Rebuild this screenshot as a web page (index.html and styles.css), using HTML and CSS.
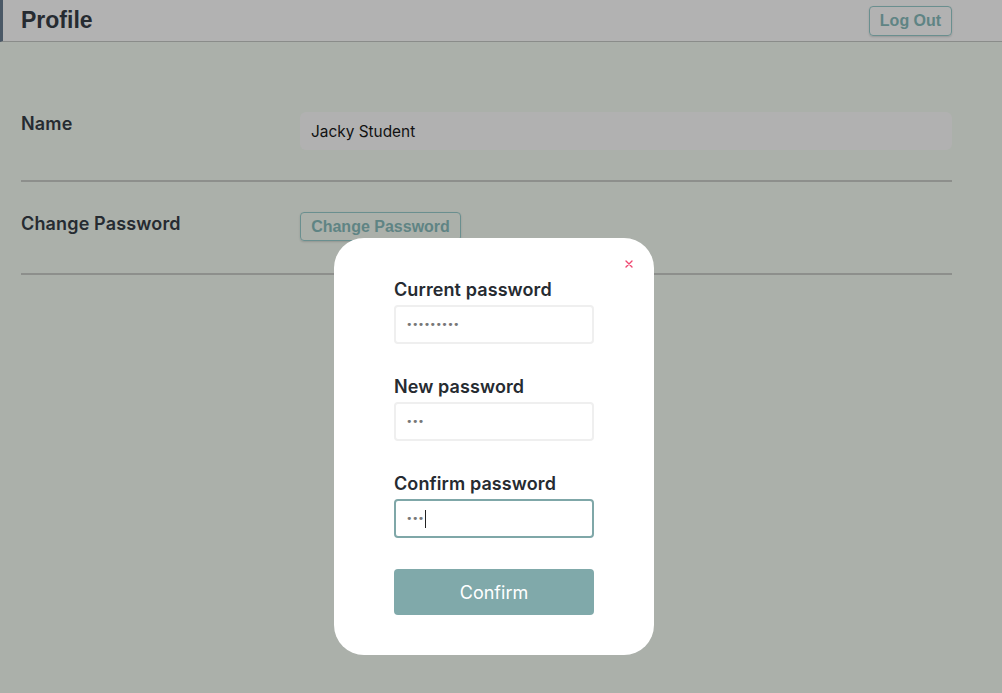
FILE: index.html
```html
<!DOCTYPE html>
<html lang="en">
<head>
<meta charset="utf-8">
<title>Profile</title>
<link rel="stylesheet" href="styles.css">
</head>
<body>
<header class="topbar">
  <h1 class="title">Profile</h1>
  <button class="btn-outline logout">Log Out</button>
</header>
<main class="content">
  <section class="row">
    <div class="row-label">Name</div>
    <div class="name-field">Jacky Student</div>
  </section>
  <section class="row">
    <div class="row-label">Change Password</div>
    <div><button class="btn-outline change">Change Password</button></div>
  </section>
</main>

<div class="modal">
  <svg class="close" width="8" height="8" viewBox="0 0 8 8" aria-label="close"><path d="M1 1 L7 7 M7 1 L1 7" stroke="#ef4770" stroke-width="1.4" stroke-linecap="round" fill="none"/></svg>
  <div class="group">
    <label class="field-label">Current password</label>
    <div class="field"><span class="dots">&#8226;&#8226;&#8226;&#8226;&#8226;&#8226;&#8226;&#8226;&#8226;</span></div>
  </div>
  <div class="group">
    <label class="field-label">New password</label>
    <div class="field"><span class="dots">&#8226;&#8226;&#8226;</span></div>
  </div>
  <div class="group">
    <label class="field-label">Confirm password</label>
    <div class="field focused"><span class="dots">&#8226;&#8226;&#8226;</span><span class="caret"></span></div>
  </div>
  <button class="confirm">Confirm</button>
</div>
</body>
</html>
```
FILE: styles.css
```css
html, body {
  margin: 0;
  padding: 0;
}
body {
  background: #abb0aa;
  font-family: Inter, "Liberation Sans", sans-serif;
  color: #262b31;
  width: 1002px;
  height: 693px;
  overflow: hidden;
}
.topbar {
  height: 41px;
  background: #b2b2b2;
  border-left: 3px solid #4a5866;
  border-bottom: 1px solid #8a8c8a;
  display: flex;
  align-items: center;
  justify-content: space-between;
  padding: 0 50px 0 18px;
}
.title {
  margin: 0;
  font-family: "Liberation Sans", Arial, sans-serif;
  font-weight: bold;
  font-size: 23px;
  color: #262b31;
  line-height: 1;
}
.btn-outline {
  font-family: "Liberation Sans", Arial, sans-serif;
  font-weight: bold;
  font-size: 16px;
  color: #5f8484;
  background: transparent;
  border: 1px solid #6a8f8f;
  border-radius: 4px;
  box-shadow: 0 1px 2px rgba(0,0,0,0.15);
  cursor: pointer;
}
.logout {
  width: 83px;
  height: 30px;
  padding: 0;
  margin-top: 1px;
}
.content {
  padding: 70px 50px 0 21px;
}
.row {
  display: grid;
  grid-template-columns: 279px 1fr;
  padding-bottom: 30px;
  border-bottom: 2px solid #8d8f8c;
  margin-bottom: 30px;
}
.row + .row {
  padding-bottom: 32px;
}
.row-label {
  font-weight: 600;
  font-size: 18px;
  letter-spacing: 0.15px;
  line-height: 20px;
  padding-top: 2px;
}
.name-field {
  height: 38px;
  background: #b1b1b1;
  border-radius: 6px;
  font-size: 15.4px;
  color: #111;
  display: flex;
  align-items: center;
  padding-left: 11px;
}
.change {
  width: 161px;
  height: 29px;
  padding: 0;
}
.modal {
  position: fixed;
  left: 334px;
  top: 238px;
  width: 320px;
  height: 417px;
  box-sizing: border-box;
  background: #ffffff;
  border-radius: 30px;
  padding: 41px 60px 0 60px;
}
.close {
  position: absolute;
  left: 291px;
  top: 22px;
}
.group {
  display: flex;
  flex-direction: column;
  gap: 4px;
  margin-bottom: 32px;
}
.group:nth-child(4) {
  margin-bottom: 31px;
}
.field-label {
  font-weight: 600;
  font-size: 18px;
  letter-spacing: 0.1px;
  line-height: 22px;
  color: #262b31;
}
.field {
  height: 39px;
  box-sizing: border-box;
  border: 2px solid #efefef;
  border-radius: 4px;
  display: flex;
  align-items: center;
  padding-left: 10px;
}
.field.focused {
  border-color: #7fa7a8;
}
.dots {
  font-size: 11px;
  color: #777;
  letter-spacing: -0.6px;
  font-family: "DejaVu Sans", sans-serif;
}
.caret {
  display: inline-block;
  width: 1px;
  height: 18px;
  background: #222;
  margin-left: 1px;
}
.confirm {
  width: 200px;
  height: 46px;
  background: #80a9aa;
  border: none;
  border-radius: 4px;
  color: #ffffff;
  font-family: Inter, "Liberation Sans", sans-serif;
  font-size: 18px;
  cursor: pointer;
}
```
